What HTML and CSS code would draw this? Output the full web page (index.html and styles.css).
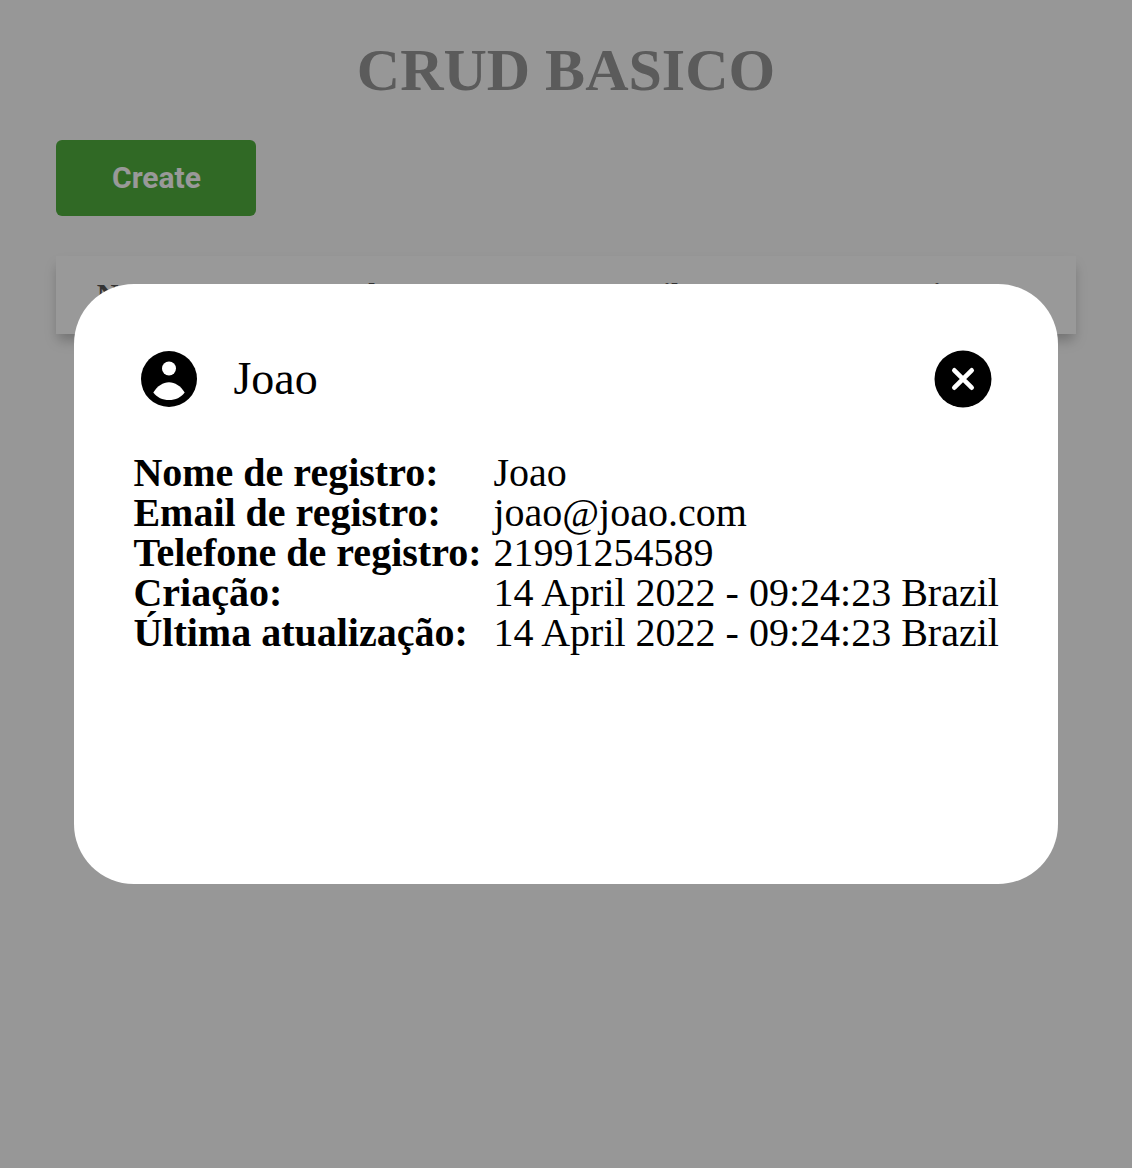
FILE: index.html
```html
<!DOCTYPE html>
<html lang="pt-BR">
<head>
<meta charset="utf-8">
<title>CRUD BASICO</title>
<link rel="stylesheet" href="styles.css">
</head>
<body>
<main class="page">
  <h1 class="title">CRUD BASICO</h1>
  <button class="create">Create</button>
  <div class="records">
    <span>Nome</span><span>Phone</span><span>Email</span><span>Action</span>
  </div>
</main>
<div class="overlay">
  <section class="modal" role="dialog">
    <header class="modal-header">
      <svg class="icon" viewBox="0 0 68 68"><circle cx="34" cy="34" r="28"/><circle class="cut" cx="34" cy="23.500" r="7"/><path class="cut" d="M18.300 47.500C22.500 41 28 37.300 34 37.300s11.500 3.700 15.700 10.200C46 52.500 40.500 55.100 34 55.100s-12-2.600-15.700-7.600z"/></svg>
      <span class="name">Joao</span>
      <svg class="icon" viewBox="0 0 68 68"><circle cx="34" cy="34" r="28.500"/><path class="cross" d="M25.300 25.300l17.400 17.400M42.700 25.300L25.300 42.700"/></svg>
    </header>
    <dl class="details">
      <dt>Nome de registro:</dt><dd>Joao</dd>
      <dt>Email de registro:</dt><dd>joao@joao.com</dd>
      <dt>Telefone de registro:</dt><dd>21991254589</dd>
      <dt>Criação:</dt><dd>14 April 2022 - 09:24:23 Brazil</dd>
      <dt>Última atualização:</dt><dd>14 April 2022 - 09:24:23 Brazil</dd>
    </dl>
  </section>
</div>
</body>
</html>
```

FILE: styles.css
```css
* {
  box-sizing: border-box;
  margin: 0;
  padding: 0;
}

body {
  min-height: 100vh;
  background: #fcfcfc;
  font-family: "Liberation Serif", serif;
  overflow: hidden;
}

.page {
  padding: 36px 56px;
}

.title {
  height: 68px;
  color: #989898;
  font-size: 60px;
  line-height: 68px;
  text-align: center;
}

.create {
  display: block;
  width: 200px;
  height: 76px;
  margin: 36px 0 40px;
  padding: 0 0 2px 1px;
  border: 0;
  border-radius: 6px;
  background: #50b03e;
  color: #fff;
  font: bold 30px Roboto, sans-serif;
}

.records {
  display: grid;
  grid-template-columns: 253px 253px 285px 1fr;
  height: 78px;
  padding-left: 40.7px;
  background: #fff;
  box-shadow: 0 8px 12px -2px rgba(0, 0, 0, .25);
  color: #555;
  font-size: 30px;
  font-weight: bold;
  line-height: 76px;
}

.overlay {
  position: fixed;
  inset: 0;
  display: flex;
  align-items: center;
  justify-content: center;
  background: rgba(0, 0, 0, .4);
}

.modal {
  width: 984px;
  height: 600px;
  padding: 60px 59px;
  border-radius: 60px;
  background: #fff;
  color: #000;
}

.modal-header {
  display: flex;
  align-items: center;
  height: 70px;
  padding: 0 2px;
}

.icon {
  width: 68px;
  height: 68px;
}

.cut {
  fill: #fff;
}

.cross {
  fill: none;
  stroke: #fff;
  stroke-width: 4.600;
  stroke-linecap: round;
}

.name {
  flex: 1;
  margin-left: 30.4px;
  font-size: 46px;
  line-height: 70px;
}

.details {
  display: grid;
  grid-template-columns: 360px 1fr;
  margin-top: 39px;
  padding-left: .4px;
  font-size: 40px;
  line-height: 40px;
  white-space: nowrap;
}

.details dt {
  font-weight: bold;
}
```
